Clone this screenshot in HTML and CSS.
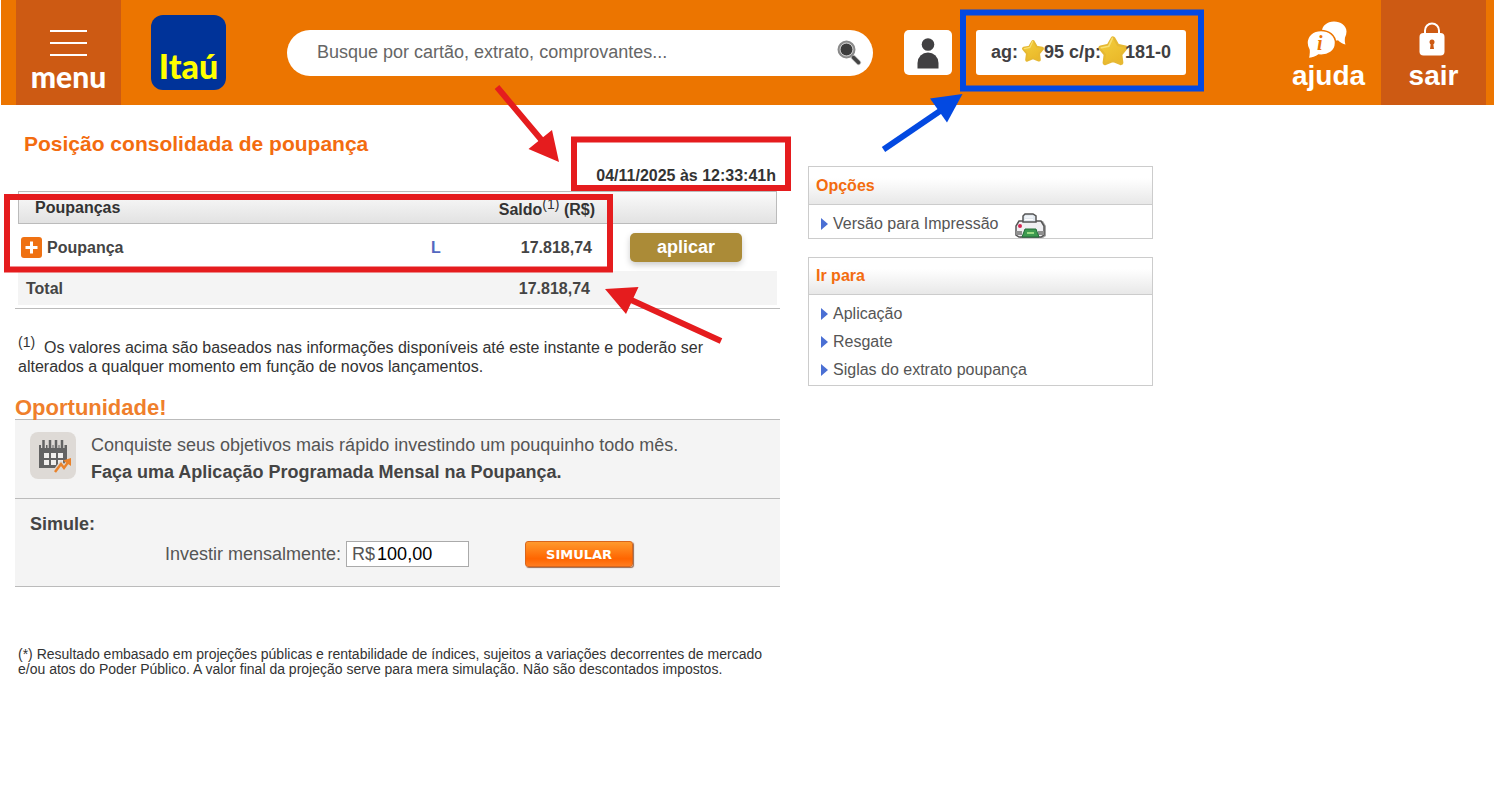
FILE: index.html
```html
<!DOCTYPE html>
<html lang="pt-BR">
<head>
  <meta charset="UTF-8">
  <meta name="viewport" content="width=device-width, initial-scale=1.0">
  <title>Itaú - Posição consolidada de poupança</title>
  <link rel="stylesheet" href="styles.css">
</head>
<body>
  <header class="topo">
    <button class="topo-botao menu" type="button">
      <span class="menu-linhas"><i></i><i></i><i></i></span>
      <span class="menu-texto">menu</span>
    </button>
    <a class="logo" href="#">Itaú</a>
    <form class="busca">
      <input type="text" aria-label="Busca" placeholder="Busque por cartão, extrato, comprovantes...">
      <button type="button" aria-label="Buscar">
        <svg width="26" height="26" viewBox="0 0 26 26">
          <path d="M17 17l5.500 5.500" stroke="#bbb" stroke-width="5" stroke-linecap="round"/>
          <path d="M17.500 17.500l5 5" stroke="#444" stroke-width="3.500" stroke-linecap="round"/>
          <circle cx="10.500" cy="9.500" r="7.500" fill="#3c3c3c" stroke="#8a8a8a" stroke-width="3"/>
          <circle cx="10.500" cy="9.500" r="6.500" fill="none" stroke="#ccc" stroke-width="1"/>
        </svg>
      </button>
    </form>
    <button class="perfil" type="button" aria-label="Perfil">
      <svg width="24" height="32" viewBox="0 0 24 32" fill="#414042">
        <circle cx="12" cy="7.500" r="6.300"/>
        <path d="M1.500 31.500V26a10.500 10.500 0 0 1 21 0v5.500z"/>
      </svg>
    </button>
    <div class="conta">
      <span>ag:</span>
      <svg class="estrela" viewBox="0 0 30 30"><use href="#estrela"/></svg>
      <span>95 c/p:</span>
      <svg class="estrela grande" viewBox="0 0 30 30"><use href="#estrela"/></svg>
      <span>181-0</span>
    </div>
    <a class="topo-botao ajuda" href="#">
      <svg width="46" height="38" viewBox="0 0 46 38">
        <path d="M28 0.500c-7 0-12 4.500-12 9.500 0 5.500 5 9.500 12 9.500 1 0 3 0 4-.3 2 2 5 3.800 7.500 4.300-.8-2-.8-4.500-.5-7 1-2 1.500-4 1.500-6 0-6-6-10-12.500-10z" fill="#fff"/>
        <path d="M15 9.500c-8 0-14 5-14 12.500 0 3 .8 5 2 7 .2 3 .2 5.500-1 8.500 4-.3 8-1.500 10.500-3.500 10 1 17-4 17-12 0-7.500-6.500-12.500-14.500-12.500z" fill="#fff" stroke="#ec7500" stroke-width="1.500"/>
        <text class="ajuda-i" x="11" y="29">i</text>
      </svg>
      <span>ajuda</span>
    </a>
    <a class="topo-botao sair" href="#">
      <svg width="32" height="34" viewBox="0 0 32 34">
        <path d="M7 12V8.500a7 7 0 0 1 14 0V12" fill="none" stroke="#fff" stroke-width="2"/>
        <rect x="1.500" y="11" width="25" height="22.500" rx="4" fill="#fff"/>
        <circle cx="14" cy="20" r="2.500" fill="#cd5a13"/>
        <path d="M13 20h2l1 7h-4z" fill="#cd5a13"/>
      </svg>
      <span>sair</span>
    </a>
  </header>

  <main class="conteudo">
    <section class="principal">
      <h1>Posição consolidada de poupança</h1>
      <p class="data">04/11/2025 às 12:33:41h</p>
      <table class="saldos">
        <thead>
          <tr>
            <th class="nome">Poupanças</th>
            <th class="sigla"></th>
            <th class="valor">Saldo<sup>(1)</sup> (R$)</th>
            <th></th>
          </tr>
        </thead>
        <tbody>
          <tr>
            <td>
              <div class="produto">
                <button class="mais" type="button" aria-label="Expandir">
                  <svg width="21" height="21" viewBox="0 0 21 21"><path d="M4.500 10.500h12M10.500 4.500v12" stroke="#fff" stroke-width="3"/></svg>
                </button>
                Poupança
              </div>
            </td>
            <td class="sigla"><a href="#">L</a></td>
            <td class="valor">17.818,74</td>
            <td class="acao"><button class="aplicar" type="button">aplicar</button></td>
          </tr>
        </tbody>
        <tfoot>
          <tr>
            <td>Total</td>
            <td></td>
            <td class="valor">17.818,74</td>
            <td></td>
          </tr>
        </tfoot>
      </table>
      <p class="nota"><sup>(1)</sup>&nbsp; Os valores acima são baseados nas informações disponíveis até este instante e poderão ser alterados a qualquer momento em função de novos lançamentos.</p>

      <h2>Oportunidade!</h2>
      <div class="oferta">
        <svg class="calendario" width="46" height="47" viewBox="0 0 46 47">
          <rect width="46" height="47" rx="8" fill="#dedad6"/>
          <path d="M9 13h28v23H9z" fill="#636363"/>
          <path d="M13.500 8v8M20 8v8M26 8v8M32 8v8" stroke="#dedad6" stroke-width="5"/>
          <path d="M13.500 8v8M20 8v8M26 8v8M32 8v8" stroke="#636363" stroke-width="2.500"/>
          <path d="M14 21h5v5h-5zM21 21h5v5h-5zM28 21h5v5h-5zM14 28h5v5h-5zM21 28h5v5h-5zM28 28h5v5h-5z" fill="#f1efed"/>
          <path d="M25 40l6-8 3 4 6-8" fill="none" stroke="#dedad6" stroke-width="5"/>
          <path d="M25 40l6-8 3 4 5-7" fill="none" stroke="#e9822b" stroke-width="2.500"/>
          <path d="M33 28.500l8-2.500v8z" fill="#e9822b"/>
        </svg>
        <p>Conquiste seus objetivos mais rápido investindo um pouquinho todo mês.<br>
          <strong>Faça uma Aplicação Programada Mensal na Poupança.</strong></p>
      </div>
      <form class="simule">
        <h3>Simule:</h3>
        <div class="linha">
          <label for="valor">Investir mensalmente:</label>
          <div class="campo">
            <span>R$</span>
            <input id="valor" type="text" value="100,00">
          </div>
          <button class="simular" type="button">SIMULAR</button>
        </div>
      </form>
      <p class="rodape">(*) Resultado embasado em projeções públicas e rentabilidade de índices, sujeitos a variações decorrentes de mercado e/ou atos do Poder Público. A valor final da projeção serve para mera simulação. Não são descontados impostos.</p>
    </section>

    <aside class="lateral">
      <nav class="caixa opcoes">
        <h4>Opções</h4>
        <ul>
          <li>
            <a href="#">Versão para Impressão</a>
            <svg width="32" height="26" viewBox="0 0 32 26">
              <path d="M5 8h23l3 5v10l-3 2H5z" fill="#a5a5a5"/>
              <path d="M4 8h22l3 5v9l-3 2H4l-3-2v-9z" fill="#efeff2" stroke="#555" stroke-width="1.500"/>
              <path d="M8 9V3l2-2h8l3 2v6z" fill="#e2e9f0" stroke="#555" stroke-width="1.500"/>
              <path d="M10 4h8M10 6.500h8" stroke="#fff"/>
              <circle cx="5" cy="13" r="2" fill="#d52652"/>
              <path d="M1 18h6v4H1zM23 18h6v4h-6z" fill="#909090"/>
              <path d="M10 16h11l3 8H7z" fill="#3d9b50" stroke="#226b38"/>
              <path d="M12 19h7v2h-7z" fill="#9ada83"/>
            </svg>
          </li>
        </ul>
      </nav>
      <nav class="caixa irpara">
        <h4>Ir para</h4>
        <ul>
          <li><a href="#">Aplicação</a></li>
          <li><a href="#">Resgate</a></li>
          <li><a href="#">Siglas do extrato poupança</a></li>
        </ul>
      </nav>
    </aside>
  </main>

  <!-- marcações sobre a página -->
  <svg class="marcacoes" width="1494" height="793" viewBox="0 0 1494 793">
    <defs>
      <linearGradient id="ouro" x1="0" y1="0" x2="0.600" y2="1">
        <stop offset="0" stop-color="#f3cd3c"/>
        <stop offset="1" stop-color="#eab92a"/>
      </linearGradient>
      <symbol id="estrela" viewBox="0 0 30 30">
        <path d="M15 3.500l4 7 7.500 1.500-5 6 1 8-7.500-3-7.500 3 1-8-5-6 7.500-1.500z" fill="url(#ouro)" stroke="#e6b832" stroke-width="4.500" stroke-linejoin="round"/>
        <path d="M15 3.500l4 7 7.500 1.500-5 6 1 8-7.500-3-7.500 3 1-8-5-6 7.500-1.500z" fill="url(#ouro)"/>
        <path d="M14.500 3l-3.500 7.500L4 12" fill="none" stroke="#f9e070" stroke-width="1.500" stroke-linecap="round"/>
      </symbol>
    </defs>
    <g fill="none" stroke="#e51c1e" stroke-width="6">
      <rect x="7" y="197" width="603" height="72.500"/>
      <rect x="574" y="139.500" width="214" height="48.500"/>
      <path d="M497 87l47 56M721 341l-92-42"/>
    </g>
    <path d="M559 162l-30.500-13 23.500-19zM605 289l33.500-2-12.500 27z" fill="#e51c1e"/>
    <g fill="none" stroke="#0349e1" stroke-width="6">
      <rect x="963" y="12.500" width="238" height="76"/>
      <path d="M883.500 149.500l58-39.500"/>
    </g>
    <path d="M962.500 94l-32.500 4.500 17 24z" fill="#0349e1"/>
  </svg>
</body>
</html>
```

FILE: styles.css
```css
* {
  box-sizing: border-box;
}

body {
  margin: 0;
  background-color: #fff;
  color: #333;
  font-family: "Liberation Sans", Arial, sans-serif;
  font-size: 16px;
}

h1, h2, h3, h4, p, ul {
  margin: 0;
  padding: 0;
}

button, input {
  font-family: inherit;
}

button {
  border: 0;
  padding: 0;
}

a {
  text-decoration: none;
}

.topo {
  display: flex;
  align-items: center;
  height: 105px;
  margin-left: 1px;
  padding: 0 8px 0 15px;
  background-color: #ec7500;
}

.topo-botao {
  display: flex;
  flex-direction: column;
  align-items: center;
  justify-content: flex-end;
  gap: 3px;
  width: 105px;
  height: 105px;
  padding-bottom: 12px;
  color: #fff;
  font-size: 28px;
  font-weight: bold;
  line-height: 34px;
}

.ajuda {
  gap: 0;
}

.menu, .sair {
  background-color: #cd5a13;
}

.menu-linhas {
  display: flex;
  flex-direction: column;
  gap: 10px;
}

.menu-linhas i {
  width: 37px;
  height: 2px;
  background-color: #fff;
}

.menu-texto {
  font-family: Lato, sans-serif;
  font-size: 30px;
  font-weight: 900;
}

.ajuda-i {
  font: italic bold 20px "Liberation Serif", serif;
  fill: #ec7500;
}

.logo {
  display: flex;
  align-items: flex-end;
  justify-content: center;
  width: 75px;
  height: 75px;
  margin: 0 61px 0 30px;
  border-radius: 12px;
  background-color: #003399;
  color: #ffff00;
  font: 900 34px/48px Lato, sans-serif;
}

.busca {
  display: flex;
  flex: 1;
  align-items: center;
  height: 46px;
  padding: 0 11px 0 30px;
  border-radius: 23px;
  background-color: #fff;
}

.busca input {
  flex: 1;
  min-width: 0;
  padding: 0;
  border: 0;
  outline: 0;
  color: #666;
  font-size: 18px;
}

.busca input::placeholder {
  color: #666;
}

.busca button {
  height: 26px;
  background: none;
}

.perfil {
  display: flex;
  align-items: center;
  justify-content: center;
  width: 48px;
  height: 45px;
  margin: 0 24px 0 31px;
  border-radius: 5px;
  background-color: #fff;
}

.conta {
  display: flex;
  align-items: center;
  width: 210px;
  height: 45px;
  margin-right: 90px;
  padding-left: 15px;
  border-radius: 3px;
  background-color: #fff;
  color: #414042;
  font-size: 18px;
  font-weight: bold;
  white-space: nowrap;
}

.estrela {
  flex: none;
  width: 24px;
  height: 24px;
  margin: 0 -1px 4px 3px;
}

.estrela.grande {
  width: 32px;
  height: 32px;
  margin: 0 -4px 4px;
}

.conteudo {
  display: grid;
  grid-template-columns: minmax(0, 765px) 345px;
  gap: 28px;
  padding: 26px 15px 0;
}

h1 {
  padding-left: 9px;
  color: #f36c0f;
  font-size: 21px;
  line-height: 26px;
}

.data {
  padding: 9px 4px 5px 0;
  font-size: 16px;
  font-weight: bold;
  line-height: 20px;
  text-align: right;
}

.saldos {
  width: 759px;
  max-width: 100%;
  margin-left: 3px;
  border-collapse: separate;
  border-spacing: 0;
  table-layout: fixed;
  color: #444;
  font-weight: bold;
}

.saldos th, .saldos td {
  padding: 0;
  text-align: left;
}

.saldos th {
  height: 33px;
  border-top: 1px solid #bbb;
  border-bottom: 1px solid #bbb;
  background: linear-gradient(#fafafa, #e2e2e2);
  color: #333;
  line-height: 18px;
}

.saldos th:first-child {
  border-left: 1px solid #bbb;
  padding-left: 16px;
}

.saldos th:last-child {
  border-right: 1px solid #bbb;
}

.saldos .nome {
  width: 382px;
}

.saldos .sigla {
  width: 72px;
  text-align: center;
}

.saldos .valor {
  width: 126px;
  padding-right: 6px;
  text-align: right;
}

.saldos th.valor {
  padding: 4px 3px 0 0;
}

.saldos tbody td {
  height: 47px;
}

.saldos tfoot td {
  height: 34px;
  padding-top: 2px;
  background-color: #f4f4f4;
}

.saldos tfoot td:first-child {
  padding-left: 8px;
}

.saldos tfoot .valor {
  padding-right: 8px;
}

.sigla a {
  color: #5468c0;
}

sup {
  font-size: 14px;
  font-weight: normal;
  line-height: 0;
}

.produto {
  display: flex;
  align-items: center;
  gap: 5px;
  padding-left: 3px;
}

.mais {
  width: 21px;
  height: 21px;
  border-radius: 3px;
  background-color: #ef7112;
}

.mais svg {
  display: block;
}

.saldos .acao {
  padding-left: 32px;
}

.aplicar {
  width: 112px;
  height: 29px;
  border-radius: 5px;
  background-color: #ab8b37;
  box-shadow: 0 3px 6px #ccc;
  color: #fff;
  font-size: 18px;
  font-weight: bold;
}

.nota {
  margin-top: 3px;
  padding: 29px 54px 0 3px;
  border-top: 1px solid #bbb;
  line-height: 19px;
}

h2 {
  margin-top: 20px;
  color: #ef7f2c;
  font-size: 22px;
  line-height: 23px;
}

.oferta {
  display: flex;
  gap: 15px;
  padding: 12px 15px;
  border-top: 1px solid #bbb;
  background-color: #f4f4f4;
  color: #555;
  font-size: 18px;
  line-height: 27px;
}

.calendario {
  flex: none;
}

.oferta strong {
  color: #444;
}

.simule {
  padding: 12px 15px 19px;
  border-top: 1px solid #bbb;
  border-bottom: 1px solid #bbb;
  background-color: #f4f4f4;
  color: #555;
  font-size: 18px;
}

.simule h3 {
  color: #444;
  font-size: 18px;
  line-height: 26px;
}

.linha {
  display: flex;
  align-items: center;
  margin-top: 4px;
  padding-left: 135px;
}

.campo {
  display: flex;
  align-items: center;
  width: 123px;
  height: 26px;
  margin: 0 56px 0 5px;
  padding-left: 5px;
  border: 1px solid #aaa;
  background-color: #fff;
}

.campo input {
  flex: 1;
  min-width: 0;
  padding: 0 0 0 2px;
  border: 0;
  outline: 0;
  background: none;
  color: #000;
  font-size: 18px;
}

.simular {
  width: 108px;
  height: 26px;
  border: 1px solid #d9661c;
  border-radius: 3px;
  background: linear-gradient(#ff9a2e, #ff6500 70%, #ff7d20);
  box-shadow: 1px 1px 1px #9a6a50;
  color: #fff;
  font: bold 13px "DejaVu Sans", sans-serif;
}

.rodape {
  margin-top: 60px;
  padding: 0 18px 0 3px;
  font-size: 14px;
  line-height: 15px;
  text-align: justify;
}

.lateral {
  display: flex;
  flex-direction: column;
  gap: 18px;
  padding-top: 35px;
}

.caixa {
  border: 1px solid #ccc;
}

.caixa h4 {
  padding-left: 7px;
  border-bottom: 1px solid #ccc;
  background: linear-gradient(#fff 30%, #e8e8e8);
  color: #f36c0f;
  font-size: 16px;
  line-height: 36px;
}

.caixa li {
  display: flex;
  align-items: center;
  gap: 5px;
  height: 28px;
  padding-left: 12px;
  list-style: none;
}

.caixa li::before {
  content: "";
  border: 6px solid transparent;
  border-left: 7px solid #4a6fd4;
  border-right: 0;
}

.caixa a {
  color: #555;
}

.opcoes ul {
  padding-top: 5px;
}

.opcoes li svg {
  margin: 4px 0 0 12px;
}

.opcoes h4 {
  line-height: 37px;
}

.irpara ul {
  padding: 5px 0 1px;
}

.marcacoes {
  position: absolute;
  top: 0;
  left: 0;
  pointer-events: none;
}
```
